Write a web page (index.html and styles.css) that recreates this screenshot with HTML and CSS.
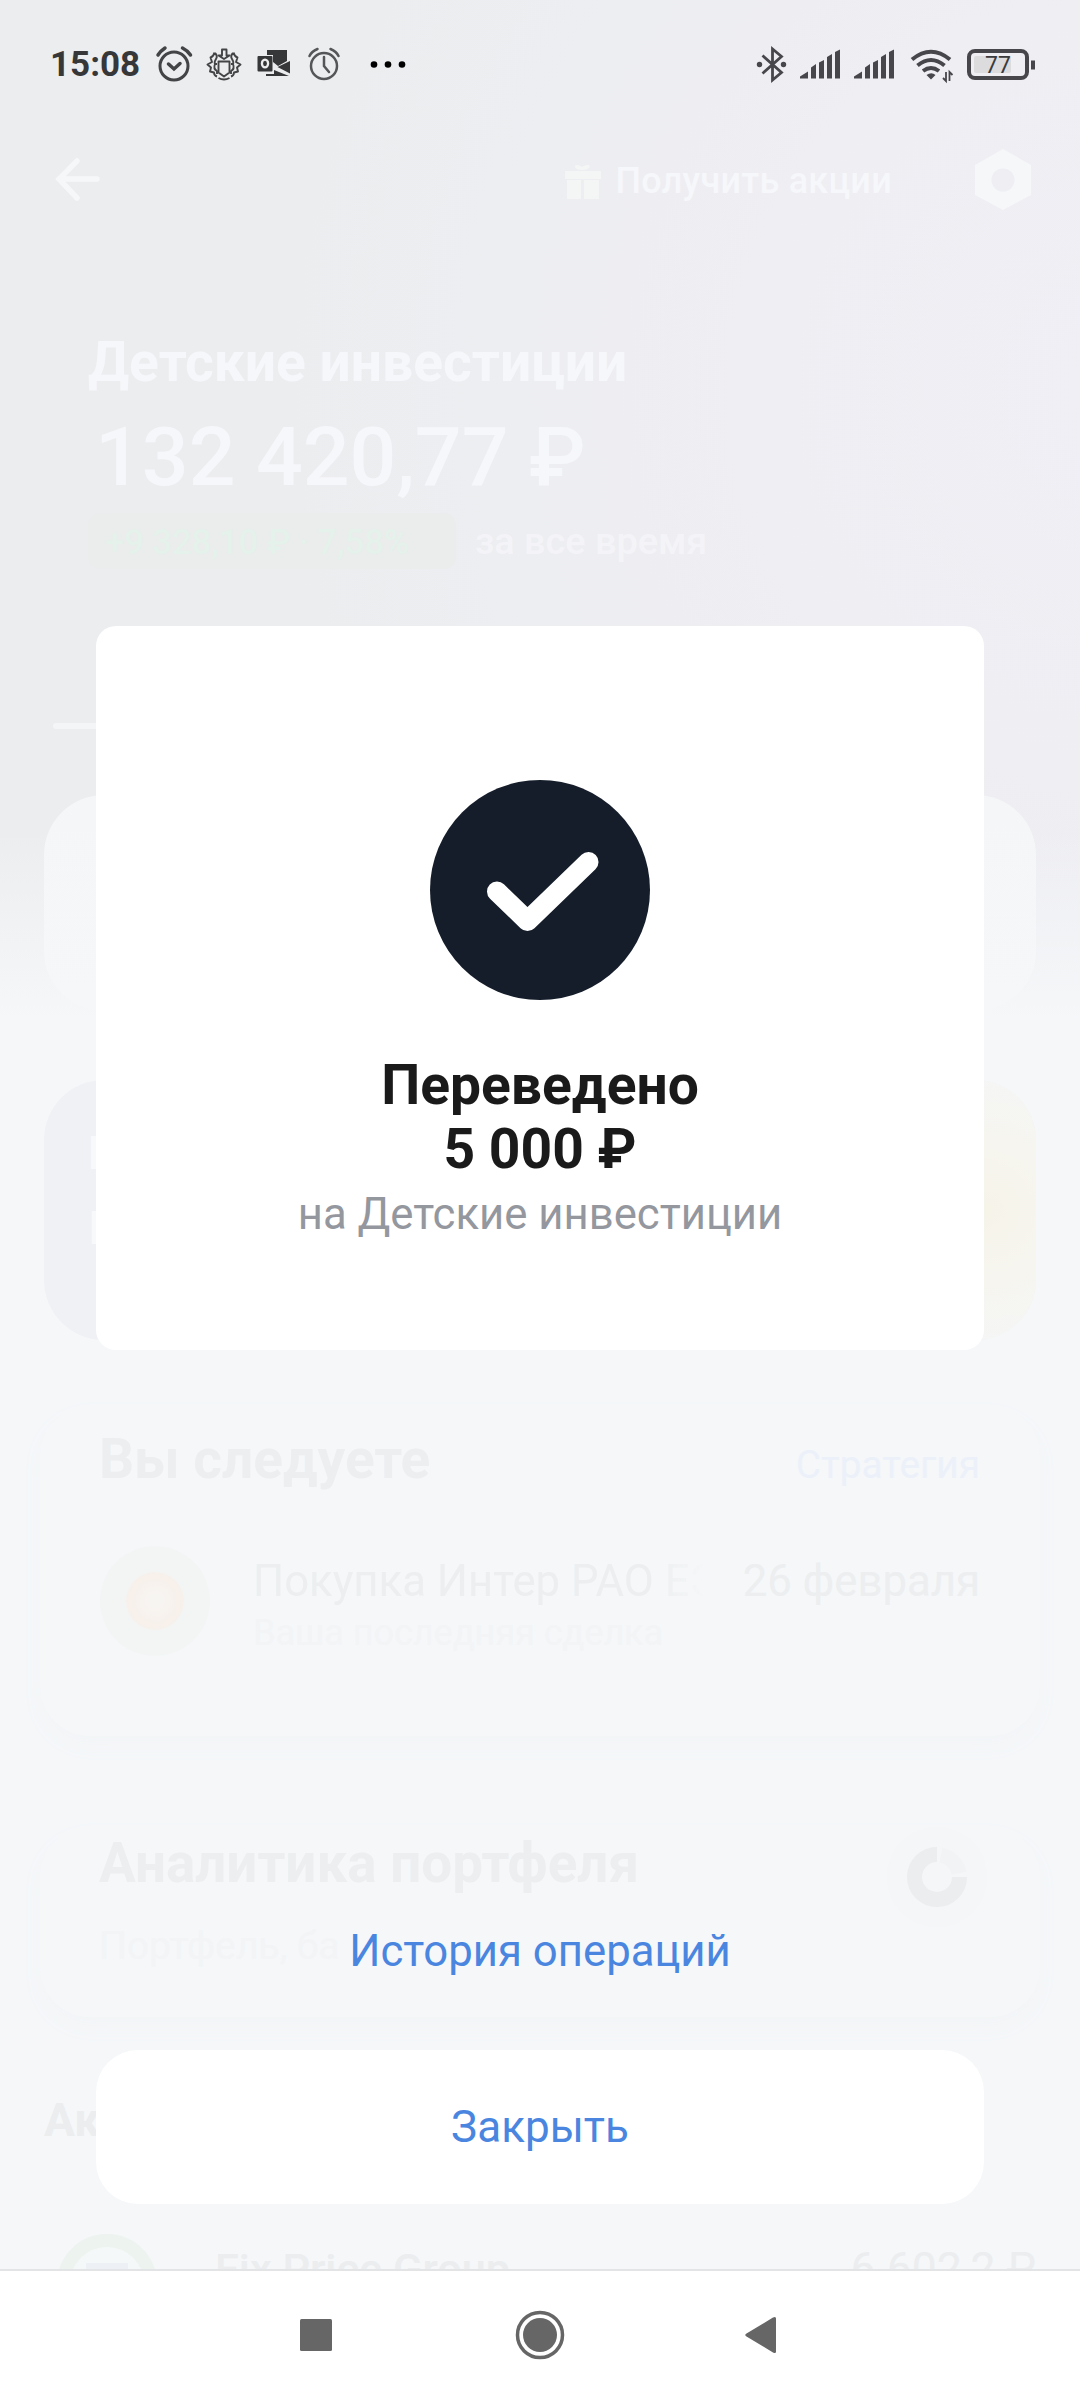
FILE: index.html
```
<!DOCTYPE html>
<html lang="ru">
<head>
<meta charset="utf-8">
<title>Переведено</title>
<link rel="stylesheet" href="styles.css">
</head>
<body>
<div class="screen">
  <main class="page" aria-hidden="true">
    <section class="hero">
      <div class="toolbar">
        <svg class="back" viewBox="0 0 46 46"><path d="M23 4L5 22l18 19M5 22h38" fill="none" stroke="#f6f7f9" stroke-width="5.5" stroke-linecap="round"/></svg>
        <div class="promo">
          <svg class="gift" viewBox="0 0 38 40"><g fill="#f4f6f5"><path d="M1 10h36v8H1zM3 19h14v19H3zM20 19h15v19H20z"/><path d="M18 9C8 9 9 0 18 6C28 0 29 9 18 9z"/></g></svg>
          <span>Получить акции</span>
        </div>
        <svg class="nut" viewBox="0 0 58 62"><path d="M29 0L57 16v30L29 61L1 46V16z" fill="#f5f7f9"/><circle cx="29" cy="31" r="11.5" fill="#eeeef3"/></svg>
      </div>
      <h1 class="account">Детские инвестиции</h1>
      <div class="balance">132 420,77 ₽</div>
      <div class="yield"><span class="pill">+9 328,10 ₽ · 7,58%</span><span class="period">за все время</span></div>
      <div class="tab-line"></div>
    </section>
    <section class="actions"></section>
    <section class="banner"><div class="banner-text"><b>П</b><span>Е</span></div><div class="banner-art"></div></section>
    <section class="card follow">
      <div class="card-head"><h2>Вы следуете</h2><span class="link">Стратегия</span></div>
      <div class="deal">
        <div class="avatar"><i></i></div>
        <div class="deal-text">
          <div class="deal-row"><span class="deal-name">Покупка Интер РАО ЕЭ</span><span>26 февраля</span></div>
          <div class="deal-sub">Ваша последняя сделка</div>
        </div>
      </div>
    </section>
    <section class="card analytics">
      <div><h2>Аналитика портфеля</h2><p>Портфель, ба</p></div>
      <svg class="donut" viewBox="0 0 100 100"><circle cx="50" cy="50" r="50" fill="#f4f6f7"/><path d="M50 27.5A22.5 22.5 0 1 0 72.500 50" fill="none" stroke="#ebedef" stroke-width="15"/><path d="M54 28A22.500 22.500 0 0 1 72 46" fill="none" stroke="#f1f3f5" stroke-width="15"/></svg>
    </section>
    <h3 class="stocks">Ак</h3>
    <div class="stock">
      <div class="stock-logo"><i></i></div><span class="stock-name">Fix Price Group</span><span class="stock-sum">6 602,2 ₽</span>
    </div>
  </main>

  <div class="overlay">
    <header class="status">
      <span class="time">15:08</span>
      <svg class="s-left" viewBox="0 0 260 40" fill="none" stroke="#434446" stroke-width="3">
        <circle cx="19" cy="22" r="14"/><path d="M13.500 20l5.500 5 6-5.500M3 11q2.500-4 7-7M27.500 4q5 2.500 8 7" stroke-width="3.500" stroke-linecap="round"/>
        <g stroke-width="1.900" stroke-linejoin="round"><path d="M63.500 17.500h11v11l-5.500 4-5.500-4zM67 5.500h4.500v6h3l-5.500 3.500-5.500-3.500h3.500zM63.500 34q5.500 3 11 0"/><path d="M59.500 8.500q-1 4-4 5l1.500 4.500-4.500 2.500 3.500 3-1 4 4 1q0 3 3 4M60 9q3 3 1 6t-1 5h2M60 20q-2 5 2 7v3"/><path d="M78.500 8.500q1 4 4 5l-1.500 4.500 4.500 2.500-3.500 3 1 4-4 1q0 3-3 4M78 9q-3 3-1 6t1 5h-2M78 20q2 5-2 7v3"/></g>
        <g stroke="none" fill="#363738"><path d="M112 6h20v11l-9 5-5-4v-7h-6zM135 17v12.500L122.500 23zM111 32l0-2h8v-4l15 6z"/><rect x="102.500" y="12" width="15" height="15.500" rx="1"/></g><ellipse cx="110" cy="19.500" rx="3.100" ry="3.800" stroke="#eee" stroke-width="2.300"/>
        <g stroke-width="2.500" stroke="#555658"><circle cx="169" cy="22" r="13"/><path d="M169 13v9l5 6M154.500 12q2-4.500 8-7M175.500 5q6 2.500 8 7" stroke-linecap="round"/></g>
        <g fill="#000" stroke="none"><circle cx="219" cy="20.500" r="3.300"/><circle cx="233" cy="20.500" r="3.300"/><circle cx="247" cy="20.500" r="3.300"/></g>
      </svg>
      <svg class="s-right" viewBox="0 0 284 40" fill="none" stroke="#47474b" stroke-width="3">
        <path d="M7.500 11.500L26.500 28.500L17.500 36V5l9 7.500L7.500 29.500" stroke-width="2.800"/><g fill="#47474b" stroke="none"><circle cx="4.500" cy="20.500" r="2.700"/><circle cx="28.500" cy="20.500" r="2.700"/>
        <path id="bars" d="M45 34.500v-2l8-5v7zM56 34.500V23.500l5-3.500v14.500zM64 34.500V18.500l5-2.500v18.500zM72 34.500V13l5-3v24.500zM80 34.500V8l5-2.500v29z"/><use href="#bars" x="54"/>
        <path d="M171.500 31q5-3.500 9 0l-4.500 4.500z"/></g>
        <path d="M157 15.500q19-15.500 38 0M162.500 21.500q13.500-11 27 0M168 27q8-6 16 0" stroke-width="4"/>
        <path d="M191 28v9l-3-3M194.500 37v-9l3 3" stroke-width="1.800"/>
        <rect x="214" y="7" width="58" height="27" rx="6" stroke-width="4"/><rect x="219" y="12" width="37" height="17" rx="2" fill="#dcdcdf" stroke="none"/><path d="M278 16.500v9" stroke-width="4"/>
        <text x="230" y="28.800" font-size="23" font-weight="400" fill="#3a3a3d" stroke="none">77</text>
      </svg>
    </header>
    <section class="dialog">
      <svg class="ok" viewBox="0 0 220 220"><circle cx="110" cy="110" r="110" fill="#151d2a"/><path d="M67 111.500L97.500 141L158.500 82" fill="none" stroke="#fff" stroke-width="20" stroke-linecap="round" stroke-linejoin="round"/></svg>
      <div class="done">Переведено<br>5 000 ₽</div>
      <div class="dest">на Детские инвестиции</div>
    </section>
    <a class="history">История операций</a>
    <button class="close">Закрыть</button>
    <nav class="nav">
      <svg viewBox="0 0 1080 130" fill="#666"><rect x="300" y="49" width="32" height="32" rx="1.500"/><circle cx="540" cy="65" r="22.500" fill="none" stroke="#666" stroke-width="3.500"/><circle cx="540" cy="65" r="17"/><path d="M746.500 63.500L773 47.500q3-1.500 3 1v33q0 2.500-3 1L746.500 66.500q-2.500-1.500 0-3z"/></svg>
    </nav>
  </div>
</div>
</body>
</html>
```
FILE: styles.css
```
* { box-sizing: border-box; }
body { margin: 0; font-family: Roboto, "Noto Sans", sans-serif; }
h1, h2, h3, p { margin: 0; }
svg { display: block; flex: none; }
.screen { position: relative; width: 1080px; height: 2400px; overflow: hidden; background: #f5f7f9; }

.page { height: 2270px; overflow: hidden; background: linear-gradient(180deg, rgba(245,247,249,0) 830px, #f5f7f9 1020px), radial-gradient(circle 860px at 1130px 390px, #f0eff5 0, #efeef3 45%, #edeef1 75%, #ebedef 100%); }
.hero { height: 795px; padding: 150px 48px 0 88px; color: #f6f7fa; }
.toolbar { display: flex; align-items: center; height: 60px; margin-left: -34px; }
.back { width: 46px; height: 46px; }
.promo { display: flex; align-items: center; gap: 13px; margin: 1px 82px 0 auto; font-size: 36px; font-weight: 500; letter-spacing: .25px; }
.gift { width: 38px; height: 40px; }
.nut { width: 58px; height: 62px; }
.account { margin-top: 119px; font-size: 55.2px; line-height: 66px; font-weight: 700; }
.balance { margin: 13px 0 0 7px; font-size: 82.4px; line-height: 98px; font-weight: 500; white-space: nowrap; }
.yield { display: flex; align-items: center; gap: 19px; margin-top: 7px; font-size: 37.8px; font-weight: 500; }
.pill { width: 368px; height: 56px; padding: 7px 17px; border-radius: 12px; line-height: 44px; font-size: 34.5px; background: #eaedec; color: #e5f1eb; white-space: nowrap; }
.period { color: #f4f4f8; }
.tab-line { width: 300px; height: 6px; margin: 154px 0 0 -35px; border-radius: 3px; background: #f4f5f7; }

.actions { height: 216px; margin: 0 44px; border-radius: 60px; background: linear-gradient(#f5f6f8, #f5f7f9); }
.banner { display: flex; justify-content: space-between; height: 260px; margin: 69px 44px 0; border-radius: 60px; overflow: hidden; background: #f0f1f5; }
.banner-text { display: flex; flex-direction: column; padding: 46px 0 0 44px; gap: 21px; font-size: 46px; color: #f8f9fb; }
.banner-art { width: 120px; background: radial-gradient(circle at 70px 130px, #f6f4e9, #f6f5ef 45%, #f5f6f6 95%); }

.card { margin: 0 40px; border-radius: 50px; background: #f5f7f9; box-shadow: 0 10px 20px #f3f5f7; }
.card h2 { font-size: 55px; line-height: 64px; font-weight: 700; color: #eceef0; }
.follow { height: 330px; margin-top: 66px; padding: 21px 60px; }
.card-head { display: flex; justify-content: space-between; align-items: baseline; margin-left: -1px; }
.link { font-size: 38.8px; color: #ecf1f9; }
.deal { display: flex; gap: 43px; margin-top: 55px; }
.avatar { display: grid; place-items: center; width: 110px; height: 110px; border-radius: 50%; background: #f3f5f5; }
.avatar i { width: 58px; height: 58px; border-radius: 50%; background: radial-gradient(#f7f5f2 15%, #f7f0eb 60%, #f5f3ef); }
.deal-text { flex: 1; padding-top: 9px; }
.deal-row { display: flex; justify-content: space-between; font-size: 43.7px; line-height: 52px; color: #eceeef; }
.deal-name { width: 450px; overflow: hidden; white-space: nowrap; -webkit-mask-image: linear-gradient(90deg, #000 400px, transparent 450px); }
.deal-sub { margin-top: 4px; font-size: 36px; line-height: 44px; color: #f2f4f6; }
.analytics { display: flex; justify-content: space-between; align-items: flex-start; height: 190px; margin-top: 91px; padding: 4px 53px 0 59px; }
.analytics h2 { font-size: 54.8px; }
.analytics p { margin-top: 28px; font-size: 39px; line-height: 46px; color: #f2f4f6; }
.donut { width: 100px; height: 100px; margin-top: -4px; }
.stocks { margin: 76px 0 0 44px; font-size: 46px; line-height: 54px; font-weight: 700; color: #ebedef; }
.stock { display: flex; align-items: flex-start; margin: 87px 44px 0 57px; font-size: 44.5px; line-height: 54px; color: #ebedef; }
.stock-logo { width: 100px; height: 100px; padding: 16px 16px; border: 13px solid #edf3ef; border-radius: 50%; background: #f5f8f8; }
.stock-logo i { display: block; width: 42px; height: 30px; background: #edf0f5; }
.stock-name { margin: 9px 0 0 58px; font-weight: 500; font-size: 43.3px; }
.stock-sum { margin: 8px 0 0 auto; }

.overlay { position: absolute; inset: 0; display: flex; flex-direction: column; align-items: center; }
.status { display: flex; align-items: center; width: 100%; height: 84px; padding: 46px 41px 2px 50px; }
.time { width: 90px; font-size: 35px; line-height: 38px; padding-top: 1px; font-weight: 700; color: #363738; white-space: nowrap; }
.s-left { width: 260px; height: 40px; margin-left: 15px; }
.s-right { width: 284px; height: 40px; margin-left: auto; }
.dialog { display: flex; flex-direction: column; align-items: center; width: 888px; height: 724px; margin-top: 542px; padding-top: 154px; border-radius: 20px; background: #fff; text-align: center; }
.ok { width: 220px; height: 220px; }
.done { margin-top: 53px; font-size: 55.2px; line-height: 64px; font-weight: 700; color: #1a1a1a; }
.dest { margin-top: 6px; font-size: 43.7px; line-height: 54px; color: #94979e; }
.history { margin-top: 574px; font-size: 43.7px; line-height: 54px; color: #4a86df; }
.close { width: 888px; height: 154px; margin-top: 72px; padding: 0; border: 0; border-radius: 42px; background: #fff; font: 400 44px/54px Roboto, sans-serif; color: #4a86df; }
.nav { width: 1080px; height: 131px; margin-top: auto; border-top: 2px solid #e3e4e6; background: #fff; }
.nav svg { width: 1080px; height: 130px; margin-top: -1px; }
```
